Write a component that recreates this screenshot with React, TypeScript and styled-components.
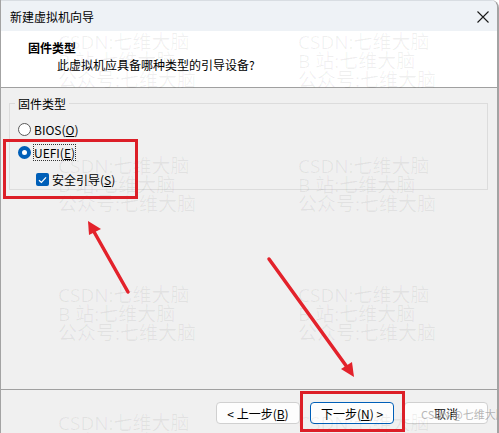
import styled, { createGlobalStyle } from 'styled-components';

const GlobalStyle = createGlobalStyle`
  html, body {
    margin: 0;
    padding: 0;
    background: #ffffff;
  }
  body {
    font-family: "Noto Sans CJK SC", "Liberation Sans", sans-serif;
    font-size: 12px;
    color: #000;
  }
`;

const marks = [
  { x: 57, y: 33 },
  { x: 297, y: 33 },
  { x: 57, y: 157 },
  { x: 297, y: 157 },
  { x: 57, y: 286 },
  { x: 297, y: 286 },
  { x: 57, y: 414 },
  { x: 297, y: 414 },
];

export default function App() {
  return (
    <>
      <GlobalStyle />
      <Window>
        <TitleBar>
          <span>新建虚拟机向导</span>
          <CloseIcon width="14" height="14" viewBox="0 0 14 14">
            <path d="M1.5 1.5 L12.5 12.5 M12.5 1.5 L1.5 12.5" stroke="#1a1a1a" strokeWidth="1.1" />
          </CloseIcon>
        </TitleBar>

        <Header>
          <HeaderTitle>固件类型</HeaderTitle>
          <HeaderText>此虚拟机应具备哪种类型的引导设备?</HeaderText>
        </Header>

        <Body>
          <GroupBox>
            <GroupLabel>固件类型</GroupLabel>
            <OptionRow>
              <Radio />
              <OptionText>BIOS(<u>O</u>)</OptionText>
            </OptionRow>
            <OptionRow>
              <Radio $checked />
              <OptionText $focused>UEFI(<u>E</u>)</OptionText>
            </OptionRow>
            <OptionRow $indent>
              <CheckBox>
                <svg width="9" height="8" viewBox="0 0 9 8">
                  <path d="M1 4.2 L3.4 6.4 L8 1.4" fill="none" stroke="#fff" strokeWidth="1.3" />
                </svg>
              </CheckBox>
              <OptionText>安全引导(<u>S</u>)</OptionText>
            </OptionRow>
          </GroupBox>
        </Body>

        <Footer>
          <Button>&lt; 上一步(<u>B</u>)</Button>
          <Button $primary>下一步(<u>N</u>) &gt;</Button>
          <Button>取消</Button>
        </Footer>

        {marks.map((m) => (
          <Watermark key={`${m.x}-${m.y}`} style={{ left: m.x, top: m.y }}>
            <div>CSDN:七维大脑</div>
            <div>B 站:七维大脑</div>
            <div>公众号:七维大脑</div>
          </Watermark>
        ))}

        <Credit>CSDN @七维大脑</Credit>

        <Annotations width="499" height="433" viewBox="0 0 499 433">
          <rect x="4.5" y="140.5" width="132" height="57" fill="none" stroke="#dc1e27" strokeWidth="3" />
          <rect x="301.5" y="392.5" width="102" height="38" fill="none" stroke="#dc1e27" strokeWidth="3" />
          <line x1="128" y1="292" x2="93" y2="230" stroke="#e3222b" strokeWidth="3.5" strokeLinecap="round" />
          <polygon points="88,221 101,229 89,235" fill="#e3222b" />
          <line x1="269" y1="259" x2="347" y2="367" stroke="#e3222b" strokeWidth="3.5" strokeLinecap="round" />
          <polygon points="354,377 341,369 352,362" fill="#e3222b" />
        </Annotations>
      </Window>
    </>
  );
}

const Window = styled.div`
  position: relative;
  display: flex;
  flex-direction: column;
  width: 499px;
  height: 433px;
  box-sizing: border-box;
  border-left: 1px solid #a3a3a3;
  border-right: 2px solid #a3a3a3;
  border-top-right-radius: 8px;
  overflow: hidden;
  background: #f0f0f0;
`;

const TitleBar = styled.div`
  display: flex;
  align-items: center;
  justify-content: space-between;
  height: 31px;
  padding: 0 7px 0 9px;
  background: #eef2f6;
  border-top: 1px solid #d8dde2;
  box-sizing: border-box;
`;

const CloseIcon = styled.svg`
  display: block;
  margin-top: 1px;
`;

const Header = styled.div`
  display: flex;
  flex-direction: column;
  height: 57px;
  padding: 8px 0 0 27px;
  box-sizing: border-box;
  background: #ffffff;
  border-bottom: 1px solid #a0a0a0;
`;

const HeaderTitle = styled.div`
  font-weight: 700;
  line-height: 17px;
`;

const HeaderText = styled.div`
  padding-left: 29px;
  line-height: 17px;
`;

const Body = styled.div`
  flex: 1;
  padding: 15px 9px 0 8px;
  border-bottom: 1px solid #a0a0a0;
`;

const GroupBox = styled.div`
  position: relative;
  display: flex;
  flex-direction: column;
  gap: 6px;
  height: 87px;
  box-sizing: border-box;
  border: 1px solid #dcdcdc;
  padding: 17px 0 0 8px;
`;

const GroupLabel = styled.span`
  position: absolute;
  top: -9px;
  left: 5px;
  padding: 0 3px;
  background: #f0f0f0;
  line-height: 17px;
`;

const OptionRow = styled.label<{ $indent?: boolean }>`
  display: flex;
  align-items: center;
  gap: 3px;
  height: 17px;
  padding-left: ${(p) => (p.$indent ? '18px' : '0')};
  margin-top: ${(p) => (p.$indent ? '4px' : '0')};
`;

const Radio = styled.span<{ $checked?: boolean }>`
  width: 13px;
  height: 13px;
  box-sizing: border-box;
  border-radius: 50%;
  border: ${(p) => (p.$checked ? '4px solid #005fb8' : '1px solid #5a5a5a')};
  background: #ffffff;
`;

const CheckBox = styled.span`
  display: flex;
  align-items: center;
  justify-content: center;
  width: 13px;
  height: 13px;
  border-radius: 2px;
  background: #005fb8;
`;

const OptionText = styled.span<{ $focused?: boolean }>`
  line-height: 15px;
  outline: ${(p) => (p.$focused ? '1px dotted #333' : 'none')};
`;

const Footer = styled.div`
  display: flex;
  justify-content: flex-end;
  gap: 10px;
  height: 43px;
  padding: 12px 9px 0 0;
  box-sizing: border-box;
`;

const Button = styled.button<{ $primary?: boolean }>`
  width: 84px;
  height: 22px;
  padding: 0;
  font: inherit;
  color: #000;
  background: #fdfdfd;
  border: 1px solid ${(p) => (p.$primary ? '#005fb8' : '#d0d0d0')};
  border-radius: 4px;
  box-shadow: ${(p) => (p.$primary ? 'inset 0 0 0 1px #ffffff' : 'none')};
`;

const Watermark = styled.div`
  position: absolute;
  font-family: "Open Sans", "Noto Sans CJK SC", sans-serif;
  font-size: 19px;
  line-height: 19px;
  color: rgba(0, 0, 0, 0.06);
  pointer-events: none;
  white-space: nowrap;
`;

const Credit = styled.div`
  position: absolute;
  left: 420px;
  top: 406px;
  font-size: 11px;
  color: rgba(120, 120, 120, 0.55);
  text-shadow: 0 0 2px #ffffff;
  white-space: nowrap;
`;

const Annotations = styled.svg`
  position: absolute;
  left: -1px;
  top: 0;
  pointer-events: none;
`;
